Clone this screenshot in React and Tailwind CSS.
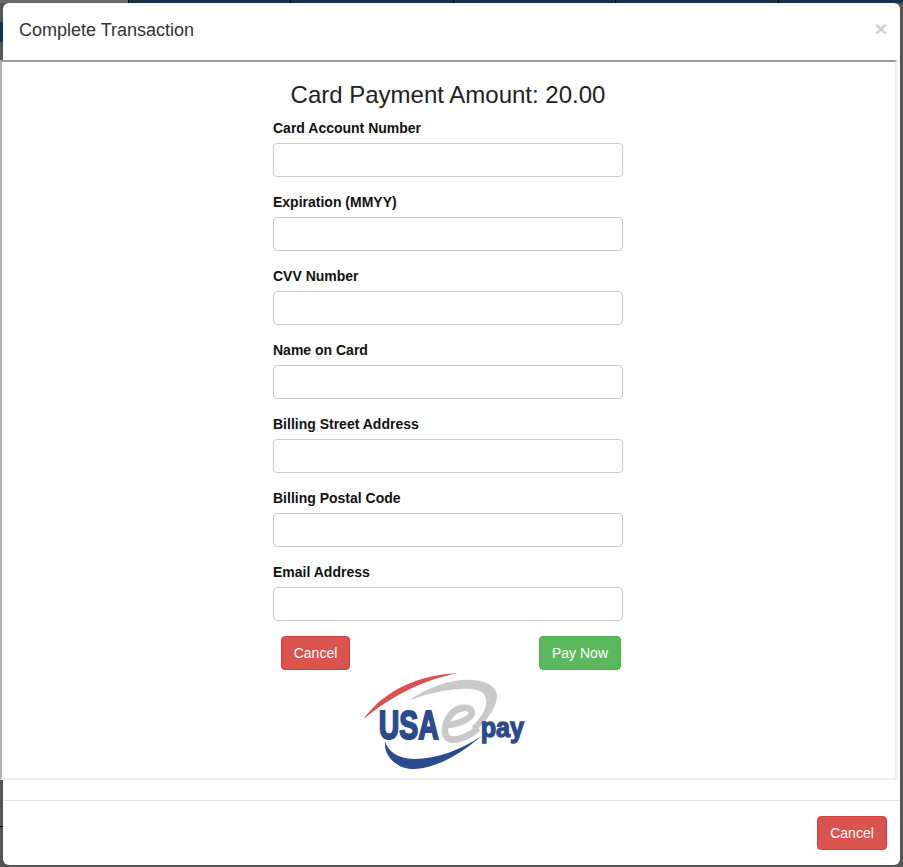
const fields = [
  "Card Account Number",
  "Expiration (MMYY)",
  "CVV Number",
  "Name on Card",
  "Billing Street Address",
  "Billing Postal Code",
  "Email Address",
];

function UsaEpayLogo() {
  return (
    <svg width="167" height="98" viewBox="69 36 501 294" className="block">
      <path d="M70 178 C130 95 230 45 352 40 C260 58 165 100 70 178 Z" fill="#dc5050" />
      <path d="M205 122 C270 78 340 55 400 60 C455 65 482 90 467 130 C455 165 430 190 410 212 L395 200 C435 165 450 125 430 100 C410 78 320 80 205 122 Z" fill="#c9c9c9" />
      <path d="M325 195 C360 190 400 175 395 155 C388 135 345 140 325 175 C305 215 315 245 350 238 C375 235 395 222 415 205" fill="none" stroke="#c9c9c9" strokeWidth="20" />
      <path d="M135 245 C130 290 175 330 225 327 C300 322 370 275 425 228 C360 270 290 298 220 297 C175 295 145 275 135 245 Z" fill="#2c4a8e" />
      <text x="116" y="236" fontFamily="Liberation Sans, sans-serif" fontWeight="700" fontSize="120" fill="#2c4a8e" stroke="#2c4a8e" strokeWidth="6" textLength="180" lengthAdjust="spacingAndGlyphs">USA</text>
      <text x="422" y="230" fontFamily="Liberation Sans, sans-serif" fontWeight="700" fontSize="84" fill="#2c4a8e" stroke="#2c4a8e" strokeWidth="4" textLength="130" lengthAdjust="spacingAndGlyphs">pay</text>
    </svg>
  );
}

export default function App() {
  return (
    <div className="relative w-[903px] h-[867px] overflow-hidden bg-[#555555] font-['Liberation_Sans',Arial,sans-serif]">
      <div className="absolute left-0 top-[22px] w-[3px] h-[20px] bg-[#12344f]" />
      <div className="absolute left-0 top-[826px] w-[3px] h-px bg-black" />
      <div className="flex h-[3px] bg-[#12344f]">
        <div className="w-[128px] bg-[#6a6a6a]" />
        <div className="w-[162px] border-l border-black" />
        <div className="w-[163px] border-l border-black" />
        <div className="w-[162px] border-l border-black" />
        <div className="w-[163px] border-l border-black" />
        <div className="flex-1 border-l border-black" />
      </div>

      <div className="ml-[3px] w-[897px] h-[862px] rounded-md bg-white flex flex-col">
        <div className="h-[57px] shrink-0 flex items-center justify-between pl-4 pr-[13px] pb-[3px]">
          <h4 className="text-[18px] leading-5 text-[#333333]">Complete Transaction</h4>
          <span className="text-[21px] leading-none font-bold text-[#cfcfcf] mt-[-4px]">×</span>
        </div>

        <div className="-ml-[3px] w-[897px] h-[720px] shrink-0 border-2 border-t-[#9a9a9a] border-l-[#b0b0b0] border-r-[#eeeeee] border-b-[#eeeeee] bg-white">
          <div className="w-[350px] ml-[271px] pt-5">
            <h3 className="text-[24px] leading-[26px] text-center text-[#222222] mb-[10px]">Card Payment Amount: 20.00</h3>
            {fields.map((label) => (
              <div key={label} className="mb-[15px]">
                <label className="block text-[14px] leading-5 font-bold text-[#111111] mb-[5px]">{label}</label>
                <input className="block w-full h-[34px] rounded border border-[#cccccc] bg-white" />
              </div>
            ))}
            <div className="flex justify-between pl-2 pr-[2px]">
              <button className="h-[34px] w-[69px] rounded bg-[#d9534f] border border-[#d43f3a] text-[14px] text-white">Cancel</button>
              <button className="h-[34px] w-[82px] rounded bg-[#5cb85c] border border-[#4cae4c] text-[14px] text-white">Pay Now</button>
            </div>
            <div className="ml-[90px] mt-[2px]">
              <UsaEpayLogo />
            </div>
          </div>
        </div>

        <div className="mt-5 flex-1 border-t border-[#e5e5e5] flex justify-end items-start pt-[15px] pr-[13px]">
          <button className="h-[34px] w-[70px] rounded bg-[#d9534f] border border-[#d43f3a] text-[14px] text-white">Cancel</button>
        </div>
      </div>
    </div>
  );
}
